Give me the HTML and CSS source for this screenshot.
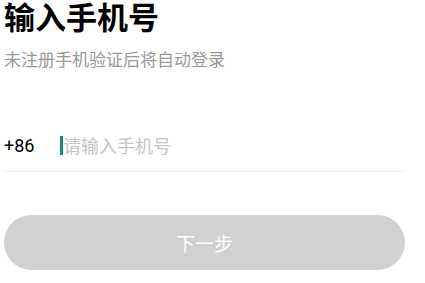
FILE: index.html
```html
<!DOCTYPE html>
<html lang="zh">
<head>
<meta charset="utf-8">
<link rel="stylesheet" href="styles.css">
</head>
<body>
<main class="page">
  <h1 class="title">输入手机号</h1>
  <p class="subtitle">未注册手机验证后将自动登录</p>
  <div class="phone-row">
    <span class="prefix">+86</span>
    <span class="cursor"></span>
    <span class="placeholder">请输入手机号</span>
  </div>
  <button class="next-btn" type="button">下一步</button>
</main>
</body>
</html>
```
FILE: styles.css
```css
html, body {
  margin: 0;
  padding: 0;
  background: #ffffff;
}
body {
  font-family: "Noto Sans CJK SC", "Noto Sans", sans-serif;
}
.page {
  padding: 0 20px 0 4px;
  display: flex;
  flex-direction: column;
}
.title {
  margin: 0;
  font-size: 31px;
  line-height: 32px;
  font-weight: 700;
  color: #000;
}
.subtitle {
  margin: 15px 0 0 0;
  font-size: 17px;
  line-height: 24px;
  color: #999999;
}
.phone-row {
  margin-top: 52px;
  height: 44px;
  padding-bottom: 4px;
  display: flex;
  align-items: center;
  border-bottom: 1px solid #e8e8e8;
}
.prefix {
  font-family: "Roboto", "Noto Sans", sans-serif;
  font-size: 18px;
  color: #000;
  width: 56px;
}
.cursor {
  width: 3px;
  height: 19px;
  background: #138a7a;
}
.placeholder {
  font-size: 18px;
  color: #c4c4c4;
  line-height: 24px;
}
.next-btn {
  margin-top: 43px;
  height: 55px;
  border: none;
  border-radius: 28px;
  background: #d1d1d1;
  color: #ffffff;
  font-family: "Noto Sans CJK SC", sans-serif;
  font-size: 19px;
  padding: 0;
}
```
